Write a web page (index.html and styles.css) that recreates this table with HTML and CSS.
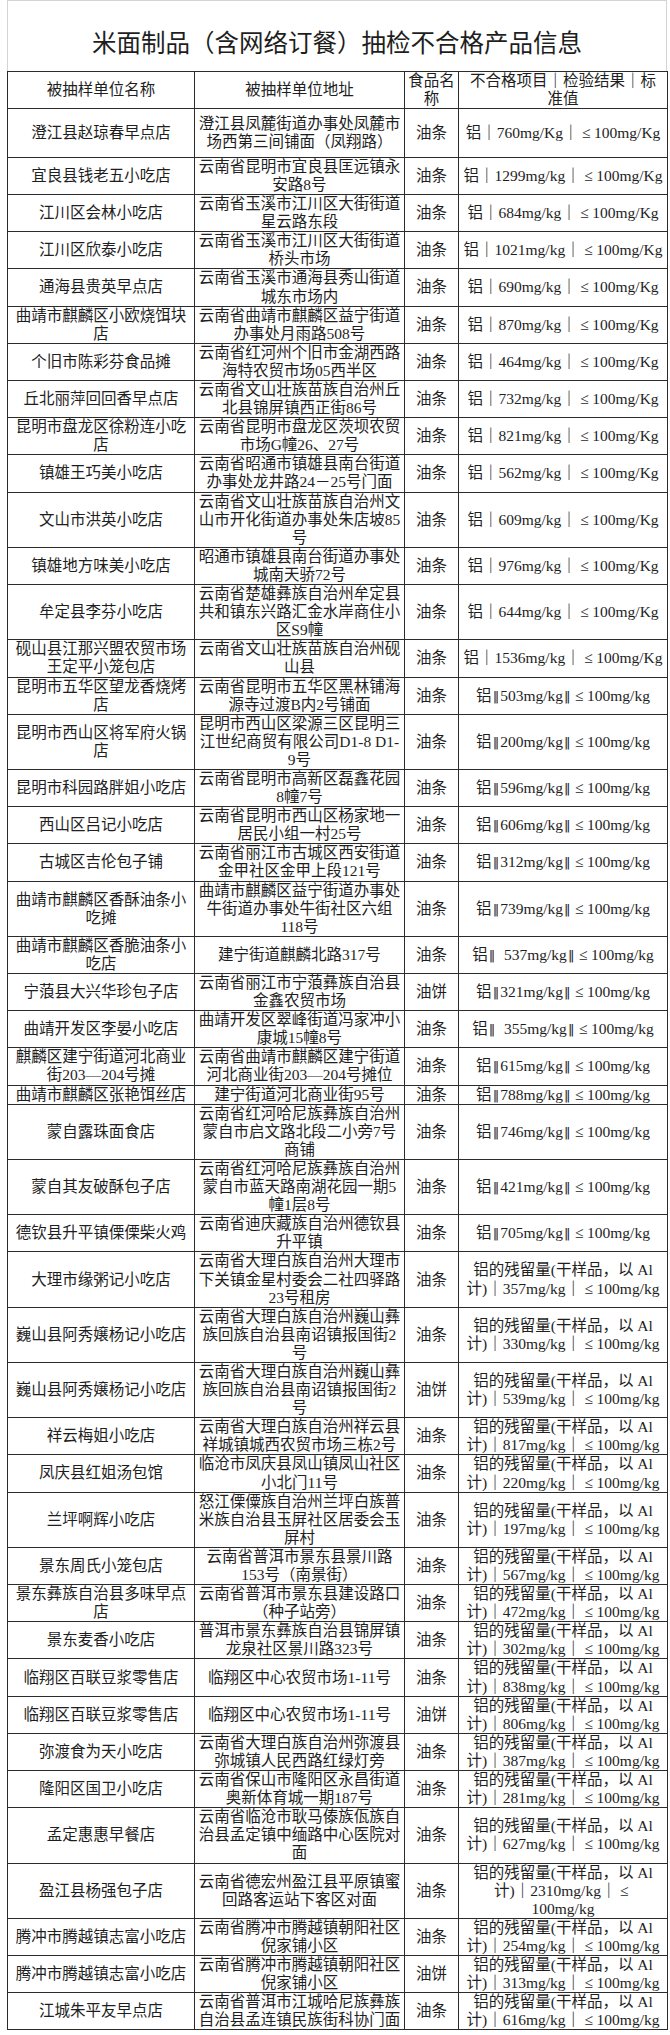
FILE: index.html
```html
<!DOCTYPE html>
<html lang="zh-CN">
<head>
<meta charset="utf-8">
<title>米面制品（含网络订餐）抽检不合格产品信息</title>
<link rel="stylesheet" href="styles.css">
</head>
<body>
<div class="sheet">
  <div class="title">米面制品（含网络订餐）抽检不合格产品信息</div>
  <table class="grid">
    <colgroup>
      <col class="c1"><col class="c2"><col class="c3"><col class="c4">
    </colgroup>
    <thead>
      <tr>
        <th>被抽样单位名称</th>
        <th>被抽样单位地址</th>
        <th>食品名<br>称</th>
        <th>不合格项目<span class="bar">｜</span>检验结果<span class="bar">｜</span>标<br>准值</th>
      </tr>
    </thead>
    <tbody>
      <tr class="tall"><td>澄江县赵琼春早点店</td><td>澄江县凤麓街道办事处凤麓市<br>场西第三间铺面（凤翔路）</td><td>油条</td><td>铝<span class="bar">｜</span>760mg/Kg<span class="bar">｜</span><span class="le">≤</span>100mg/Kg</td></tr>
      <tr><td>宜良县钱老五小吃店</td><td>云南省昆明市宜良县匡远镇永<br>安路8号</td><td>油条</td><td>铝<span class="bar">｜</span>1299mg/kg<span class="bar">｜</span><span class="le">≤</span>100mg/Kg</td></tr>
      <tr><td>江川区会林小吃店</td><td>云南省玉溪市江川区大街街道<br>星云路东段</td><td>油条</td><td>铝<span class="bar">｜</span>684mg/kg<span class="bar">｜</span><span class="le">≤</span>100mg/Kg</td></tr>
      <tr><td>江川区欣泰小吃店</td><td>云南省玉溪市江川区大街街道<br>桥头市场</td><td>油条</td><td>铝<span class="bar">｜</span>1021mg/kg<span class="bar">｜</span><span class="le">≤</span>100mg/Kg</td></tr>
      <tr><td>通海县贵英早点店</td><td>云南省玉溪市通海县秀山街道<br>城东市场内</td><td>油条</td><td>铝<span class="bar">｜</span>690mg/kg<span class="bar">｜</span><span class="le">≤</span>100mg/Kg</td></tr>
      <tr><td>曲靖市麒麟区小欧烧饵块<br>店</td><td>云南省曲靖市麒麟区益宁街道<br>办事处月雨路508号</td><td>油条</td><td>铝<span class="bar">｜</span>870mg/kg<span class="bar">｜</span><span class="le">≤</span>100mg/Kg</td></tr>
      <tr><td>个旧市陈彩芬食品摊</td><td>云南省红河州个旧市金湖西路<br>海特农贸市场05西半区</td><td>油条</td><td>铝<span class="bar">｜</span>464mg/kg<span class="bar">｜</span><span class="le">≤</span>100mg/Kg</td></tr>
      <tr><td>丘北丽萍回回香早点店</td><td>云南省文山壮族苗族自治州丘<br>北县锦屏镇西正街86号</td><td>油条</td><td>铝<span class="bar">｜</span>732mg/kg<span class="bar">｜</span><span class="le">≤</span>100mg/Kg</td></tr>
      <tr><td>昆明市盘龙区徐粉连小吃<br>店</td><td>云南省昆明市盘龙区茨坝农贸<br>市场G幢26、27号</td><td>油条</td><td>铝<span class="bar">｜</span>821mg/kg<span class="bar">｜</span><span class="le">≤</span>100mg/Kg</td></tr>
      <tr><td>镇雄王巧美小吃店</td><td>云南省昭通市镇雄县南台街道<br>办事处龙井路24－25号门面</td><td>油条</td><td>铝<span class="bar">｜</span>562mg/kg<span class="bar">｜</span><span class="le">≤</span>100mg/Kg</td></tr>
      <tr><td>文山市洪英小吃店</td><td>云南省文山壮族苗族自治州文<br>山市开化街道办事处朱店坡85<br>号</td><td>油条</td><td>铝<span class="bar">｜</span>609mg/kg<span class="bar">｜</span><span class="le">≤</span>100mg/Kg</td></tr>
      <tr><td>镇雄地方味美小吃店</td><td>昭通市镇雄县南台街道办事处<br>城南天骄72号</td><td>油条</td><td>铝<span class="bar">｜</span>976mg/kg<span class="bar">｜</span><span class="le">≤</span>100mg/Kg</td></tr>
      <tr><td>牟定县李芬小吃店</td><td>云南省楚雄彝族自治州牟定县<br>共和镇东兴路汇金水岸商住小<br>区S9幢</td><td>油条</td><td>铝<span class="bar">｜</span>644mg/kg<span class="bar">｜</span><span class="le">≤</span>100mg/Kg</td></tr>
      <tr><td>砚山县江那兴盟农贸市场<br>王定平小笼包店</td><td>云南省文山壮族苗族自治州砚<br>山县</td><td>油条</td><td>铝<span class="bar">｜</span>1536mg/kg<span class="bar">｜</span><span class="le">≤</span>100mg/Kg</td></tr>
      <tr><td>昆明市五华区望龙香烧烤<br>店</td><td>云南省昆明市五华区黑林铺海<br>源寺过渡B内2号铺面</td><td>油条</td><td>铝<span class="dbar">‖</span>503mg/kg<span class="dbar">‖</span><span class="le">≤</span>100mg/kg</td></tr>
      <tr><td>昆明市西山区将军府火锅<br>店</td><td>昆明市西山区梁源三区昆明三<br>江世纪商贸有限公司D1-8 D1-<br>9号</td><td>油条</td><td>铝<span class="dbar">‖</span>200mg/kg<span class="dbar">‖</span><span class="le">≤</span>100mg/kg</td></tr>
      <tr><td>昆明市科园路胖姐小吃店</td><td>云南省昆明市高新区磊鑫花园<br>8幢7号</td><td>油条</td><td>铝<span class="dbar">‖</span>596mg/kg<span class="dbar">‖</span><span class="le">≤</span>100mg/kg</td></tr>
      <tr><td>西山区吕记小吃店</td><td>云南省昆明市西山区杨家地一<br>居民小组一村25号</td><td>油条</td><td>铝<span class="dbar">‖</span>606mg/kg<span class="dbar">‖</span><span class="le">≤</span>100mg/kg</td></tr>
      <tr><td>古城区吉伦包子铺</td><td>云南省丽江市古城区西安街道<br>金甲社区金甲上段121号</td><td>油条</td><td>铝<span class="dbar">‖</span>312mg/kg<span class="dbar">‖</span><span class="le">≤</span>100mg/kg</td></tr>
      <tr><td>曲靖市麒麟区香酥油条小<br>吃摊</td><td>曲靖市麒麟区益宁街道办事处<br>牛街道办事处牛街社区六组<br>118号</td><td>油条</td><td>铝<span class="dbar">‖</span>739mg/kg<span class="dbar">‖</span><span class="le">≤</span>100mg/kg</td></tr>
      <tr><td>曲靖市麒麟区香脆油条小<br>吃店</td><td>建宁街道麒麟北路317号</td><td>油条</td><td>铝<span class="dbar">‖</span>&nbsp;&nbsp;537mg/kg<span class="dbar">‖</span><span class="le">≤</span>100mg/kg</td></tr>
      <tr><td>宁蒗县大兴华珍包子店</td><td>云南省丽江市宁蒗彝族自治县<br>金鑫农贸市场</td><td>油饼</td><td>铝<span class="dbar">‖</span>321mg/kg<span class="dbar">‖</span><span class="le">≤</span>100mg/kg</td></tr>
      <tr><td>曲靖开发区李晏小吃店</td><td>曲靖开发区翠峰街道冯家冲小<br>康城15幢8号</td><td>油条</td><td>铝<span class="dbar">‖</span>&nbsp;&nbsp;355mg/kg<span class="dbar">‖</span><span class="le">≤</span>100mg/kg</td></tr>
      <tr><td>麒麟区建宁街道河北商业<br>街203—204号摊</td><td>云南省曲靖市麒麟区建宁街道<br>河北商业街203—204号摊位</td><td>油条</td><td>铝<span class="dbar">‖</span>615mg/kg<span class="dbar">‖</span><span class="le">≤</span>100mg/kg</td></tr>
      <tr><td>曲靖市麒麟区张艳饵丝店</td><td>建宁街道河北商业街95号</td><td>油条</td><td>铝<span class="dbar">‖</span>788mg/kg<span class="dbar">‖</span><span class="le">≤</span>100mg/kg</td></tr>
      <tr><td>蒙自露珠面食店</td><td>云南省红河哈尼族彝族自治州<br>蒙自市启文路北段二小旁7号<br>商铺</td><td>油条</td><td>铝<span class="dbar">‖</span>746mg/kg<span class="dbar">‖</span><span class="le">≤</span>100mg/kg</td></tr>
      <tr><td>蒙自其友破酥包子店</td><td>云南省红河哈尼族彝族自治州<br>蒙自市蓝天路南湖花园一期5<br>幢1层8号</td><td>油条</td><td>铝<span class="dbar">‖</span>421mg/kg<span class="dbar">‖</span><span class="le">≤</span>100mg/kg</td></tr>
      <tr><td>德钦县升平镇傈傈柴火鸡</td><td>云南省迪庆藏族自治州德钦县<br>升平镇</td><td>油条</td><td>铝<span class="dbar">‖</span>705mg/kg<span class="dbar">‖</span><span class="le">≤</span>100mg/kg</td></tr>
      <tr><td>大理市缘粥记小吃店</td><td>云南省大理白族自治州大理市<br>下关镇金星村委会二社四驿路<br>23号租房</td><td>油条</td><td>铝的残留量(干样品，以 Al<br>计)<span class="bar">｜</span>357mg/kg<span class="bar">｜</span><span class="le">≤</span>100mg/kg</td></tr>
      <tr><td>巍山县阿秀嬢杨记小吃店</td><td>云南省大理白族自治州巍山彝<br>族回族自治县南诏镇报国街2<br>号</td><td>油条</td><td>铝的残留量(干样品，以 Al<br>计)<span class="bar">｜</span>330mg/kg<span class="bar">｜</span><span class="le">≤</span>100mg/kg</td></tr>
      <tr><td>巍山县阿秀嬢杨记小吃店</td><td>云南省大理白族自治州巍山彝<br>族回族自治县南诏镇报国街2<br>号</td><td>油饼</td><td>铝的残留量(干样品，以 Al<br>计)<span class="bar">｜</span>539mg/kg<span class="bar">｜</span><span class="le">≤</span>100mg/kg</td></tr>
      <tr><td>祥云梅姐小吃店</td><td>云南省大理白族自治州祥云县<br>祥城镇城西农贸市场三栋2号</td><td>油条</td><td>铝的残留量(干样品，以 Al<br>计)<span class="bar">｜</span>817mg/kg<span class="bar">｜</span><span class="le">≤</span>100mg/kg</td></tr>
      <tr><td>凤庆县红姐汤包馆</td><td>临沧市凤庆县凤山镇凤山社区<br>小北门11号</td><td>油条</td><td>铝的残留量(干样品，以 Al<br>计)<span class="bar">｜</span>220mg/kg<span class="bar">｜</span><span class="le">≤</span>100mg/kg</td></tr>
      <tr><td>兰坪啊辉小吃店</td><td>怒江傈僳族自治州兰坪白族普<br>米族自治县玉屏社区居委会玉<br>屏村</td><td>油条</td><td>铝的残留量(干样品，以 Al<br>计)<span class="bar">｜</span>197mg/kg<span class="bar">｜</span><span class="le">≤</span>100mg/kg</td></tr>
      <tr><td>景东周氏小笼包店</td><td>云南省普洱市景东县景川路<br>153号（南景街）</td><td>油条</td><td>铝的残留量(干样品，以 Al<br>计)<span class="bar">｜</span>567mg/kg<span class="bar">｜</span><span class="le">≤</span>100mg/kg</td></tr>
      <tr><td>景东彝族自治县多味早点<br>店</td><td>云南省普洱市景东县建设路口<br>（种子站旁）</td><td>油条</td><td>铝的残留量(干样品，以 Al<br>计)<span class="bar">｜</span>472mg/kg<span class="bar">｜</span><span class="le">≤</span>100mg/kg</td></tr>
      <tr><td>景东麦香小吃店</td><td>普洱市景东彝族自治县锦屏镇<br>龙泉社区景川路323号</td><td>油条</td><td>铝的残留量(干样品，以 Al<br>计)<span class="bar">｜</span>302mg/kg<span class="bar">｜</span><span class="le">≤</span>100mg/kg</td></tr>
      <tr><td>临翔区百联豆浆零售店</td><td>临翔区中心农贸市场1-11号</td><td>油条</td><td>铝的残留量(干样品，以 Al<br>计)<span class="bar">｜</span>838mg/kg<span class="bar">｜</span><span class="le">≤</span>100mg/kg</td></tr>
      <tr><td>临翔区百联豆浆零售店</td><td>临翔区中心农贸市场1-11号</td><td>油饼</td><td>铝的残留量(干样品，以 Al<br>计)<span class="bar">｜</span>806mg/kg<span class="bar">｜</span><span class="le">≤</span>100mg/kg</td></tr>
      <tr><td>弥渡食为天小吃店</td><td>云南省大理白族自治州弥渡县<br>弥城镇人民西路红绿灯旁</td><td>油条</td><td>铝的残留量(干样品，以 Al<br>计)<span class="bar">｜</span>387mg/kg<span class="bar">｜</span><span class="le">≤</span>100mg/kg</td></tr>
      <tr><td>隆阳区国卫小吃店</td><td>云南省保山市隆阳区永昌街道<br>奥新体育城一期187号</td><td>油条</td><td>铝的残留量(干样品，以 Al<br>计)<span class="bar">｜</span>281mg/kg<span class="bar">｜</span><span class="le">≤</span>100mg/kg</td></tr>
      <tr><td>孟定惠惠早餐店</td><td>云南省临沧市耿马傣族佤族自<br>治县孟定镇中缅路中心医院对<br>面</td><td>油条</td><td>铝的残留量(干样品，以 Al<br>计)<span class="bar">｜</span>627mg/kg<span class="bar">｜</span><span class="le">≤</span>100mg/kg</td></tr>
      <tr><td>盈江县杨强包子店</td><td>云南省德宏州盈江县平原镇蜜<br>回路客运站下客区对面</td><td>油条</td><td>铝的残留量(干样品，以 Al<br>计)<span class="bar">｜</span>2310mg/kg<span class="bar">｜</span><span class="le">≤</span><br>100mg/kg</td></tr>
      <tr><td>腾冲市腾越镇志富小吃店</td><td>云南省腾冲市腾越镇朝阳社区<br>倪家铺小区</td><td>油条</td><td>铝的残留量(干样品，以 Al<br>计)<span class="bar">｜</span>254mg/kg<span class="bar">｜</span><span class="le">≤</span>100mg/kg</td></tr>
      <tr><td>腾冲市腾越镇志富小吃店</td><td>云南省腾冲市腾越镇朝阳社区<br>倪家铺小区</td><td>油饼</td><td>铝的残留量(干样品，以 Al<br>计)<span class="bar">｜</span>313mg/kg<span class="bar">｜</span><span class="le">≤</span>100mg/kg</td></tr>
      <tr><td>江城朱平友早点店</td><td>云南省普洱市江城哈尼族彝族<br>自治县孟连镇民族街科协门面</td><td>油条</td><td>铝的残留量(干样品，以 Al<br>计)<span class="bar">｜</span>616mg/kg<span class="bar">｜</span><span class="le">≤</span>100mg/kg</td></tr>
    </tbody>
  </table>
</div>
</body>
</html>
```

FILE: styles.css
```css
* {
  box-sizing: border-box;
}

html, body {
  margin: 0;
  padding: 0;
  background: #ffffff;
}

body {
  color: #1e1e1e;
  font-family: "Liberation Serif", "Noto Sans CJK SC", serif;
}

.sheet {
  width: 660px;
  margin-left: 7px;
}

.title {
  height: 71px;
  padding-top: 12px;
  border: 1px solid #d4d4d4;
  border-bottom: 0;
  display: flex;
  align-items: center;
  justify-content: center;
  font-family: "Noto Sans CJK SC", sans-serif;
  font-size: 24.5px;
  font-weight: 400;
  line-height: 30px;
  color: #1e1e1e;
  white-space: nowrap;
}

.grid {
  width: 660px;
  border-collapse: collapse;
  table-layout: fixed;
}

.c1 { width: 187px; }
.c2 { width: 210px; }
.c3 { width: 54px; }
.c4 { width: 209px; }

.grid th,
.grid td {
  border: 1px solid #2b2b2b;
  padding: 0 1px;
  text-align: center;
  vertical-align: middle;
  font-size: 15.5px;
  line-height: 18.1px;
  font-weight: 400;
  white-space: nowrap;
  overflow: visible;
}

.grid tr.tall td {
  height: 48.7px;
}

.bar {
  font-family: "Noto Sans CJK SC", sans-serif;
  font-weight: 700;
  line-height: 0;
}

.dbar {
  font-family: "DejaVu Sans", sans-serif;
  font-size: 13px;
  font-weight: 400;
  line-height: 0;
  padding: 0 1px;
}

.le {
  padding: 0 3.5px;
}
```
